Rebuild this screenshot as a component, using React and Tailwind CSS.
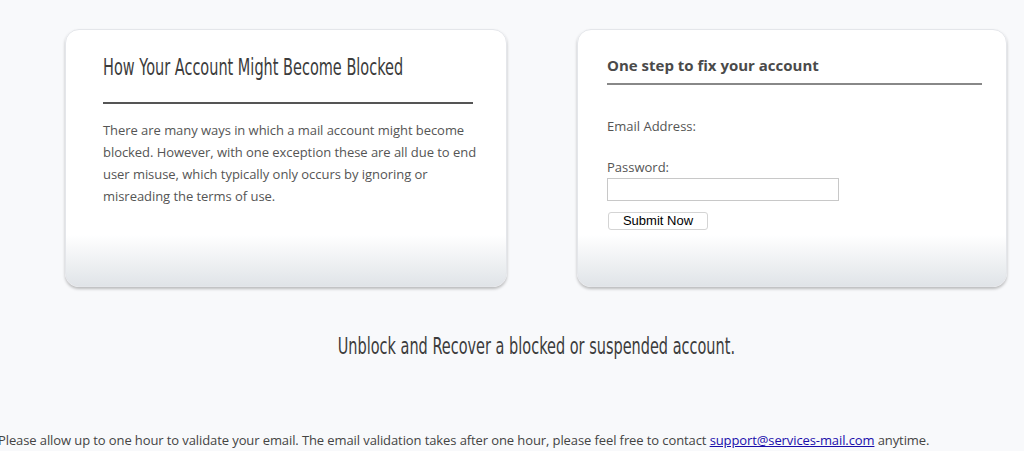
import React from 'react'

const cardCls =
  'h-[258px] rounded-[14px] border border-[#e4e6ea] shadow-[0_2px_3px_rgba(0,0,0,0.25)] bg-[linear-gradient(to_bottom,#ffffff_0%,#ffffff_80%,#e0e4e8_100%)]'

export default function App() {
  return (
    <div className="w-[1024px] h-[451px] overflow-hidden bg-[#f8f9fb] text-[#555] font-['Open_Sans','Noto_Sans',sans-serif]">
      <div className="w-[942px] ml-[65px] pt-[29px]">
        <div className="flex gap-[70px]">

          {/* left card */}
          <div className={`${cardCls} w-[442px] pl-[37px] pr-[26px] pt-[21px]`}>
            <h2 className="h-[32px] whitespace-nowrap text-[23px] leading-[32px] text-[#3c3c3c] font-['DejaVu_Sans',sans-serif]">
              <span className="inline-block origin-left scale-x-[0.63]">How Your Account Might Become Blocked</span>
            </h2>
            <div className="mt-[19px] mr-[7px] h-[2px] bg-[#555]" />
            <p className="mt-[15px] text-[13px] leading-[22px] text-[#555] tracking-[-0.05px]">
              There are many ways in which a mail account might become blocked. However, with one exception these are all due to end user misuse, which typically only occurs by ignoring or misreading the terms of use.
            </p>
          </div>

          {/* right card */}
          <div className={`${cardCls} w-[430px] pl-[29px] pr-[24px] pt-[24px]`}>
            <h3 className="text-[15px] leading-[22px] font-bold text-[#4a4a4a]">One step to fix your account</h3>
            <div className="mt-[7px] h-[2px] bg-[#888]" />
            <div className="mt-[32px] text-[13px] leading-[18px]">Email Address:</div>
            <div className="mt-[23px] text-[13px] leading-[18px]">Password:</div>
            <input
              type="password"
              className="block mt-[2px] w-[232px] h-[23px] bg-white border border-[#c8c8c8] outline-none"
            />
            <button className="block mt-[11px] ml-[1px] w-[100px] h-[18px] bg-white border border-[#d4d4d4] rounded-[3px] text-[13px] leading-[16px] text-black font-['Liberation_Sans',Arial,sans-serif]">
              Submit Now
            </button>
          </div>
        </div>

        <p className="mt-[44px] h-[30px] whitespace-nowrap text-center text-[23px] leading-[30px] text-[#3c3c3c] font-['DejaVu_Sans',sans-serif]">
          <span className="inline-block origin-center scale-x-[0.63]">Unblock and Recover a blocked or suspended account.</span>
        </p>
      </div>

      <p className="mt-[70px] ml-[-2px] whitespace-nowrap text-[13px] leading-[18px] tracking-[-0.1px] text-[#444]">
        Please allow up to one hour to validate your email. The email validation takes after one hour, please feel free to contact{' '}
        <a href="#" className="text-[#1a0dab] underline">support@services-mail.com</a> anytime.
      </p>
    </div>
  )
}
